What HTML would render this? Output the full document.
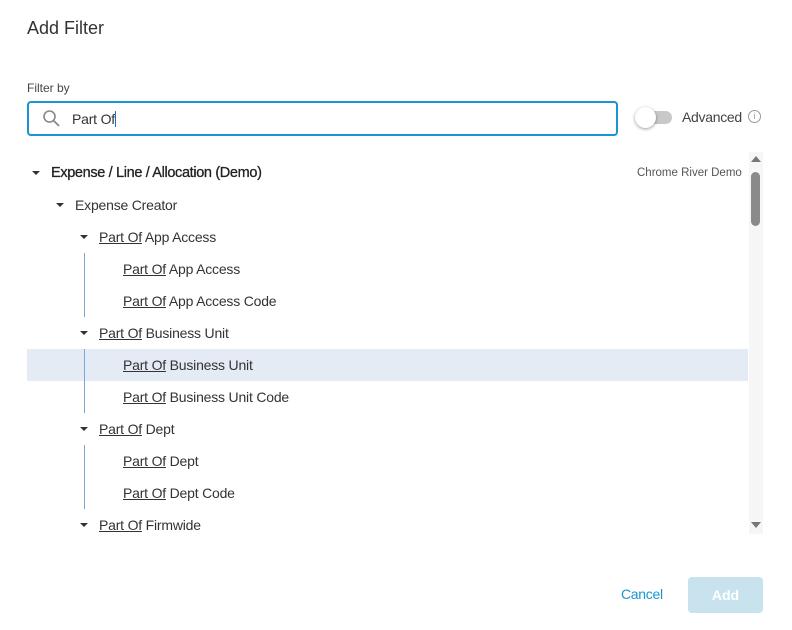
<!DOCTYPE html>
<html><head><style>
body{margin:0;width:792px;height:630px;background:#fff;font-family:"Liberation Sans",sans-serif;color:#333;position:relative;overflow:hidden}
.a{position:absolute;white-space:nowrap}
.row{position:absolute;left:0;height:32px;line-height:32px;font-size:14px;letter-spacing:-0.2px;color:#333}
.row u{text-decoration:underline}
.car{position:absolute;width:0;height:0;border-left:4px solid transparent;border-right:4px solid transparent;border-top:4px solid #333}
.vl{position:absolute;left:84px;width:1px;background:#7aa7d6}
</style></head><body>
<div class="a" style="left:27px;top:18px;font-size:18px;color:#333">Add Filter</div>
<div class="a" style="left:27px;top:81px;font-size:12px;color:#444">Filter by</div>
<div class="a" style="left:27px;top:101px;width:587px;height:31px;border:2px solid #1a95d1;border-radius:4px"></div>
<svg class="a" style="left:42px;top:109px" width="20" height="20" viewBox="0 0 20 20"><circle cx="7.5" cy="7.5" r="5.5" fill="none" stroke="#888" stroke-width="1.6"/><path d="M11.5 11.5L17 17" stroke="#888" stroke-width="1.8"/></svg>
<div class="a" style="left:72px;top:111px;font-size:14px;letter-spacing:-0.2px;color:#333">Part Of<span style="display:inline-block;width:1px;height:16px;background:#1a73c8;vertical-align:-3px"></span></div>
<div class="a" style="left:638px;top:111px;width:34px;height:13px;border-radius:7px;background:#c8c8c8"></div>
<div class="a" style="left:635px;top:107px;width:21px;height:21px;border-radius:50%;background:#fff;box-shadow:0 1px 3px rgba(0,0,0,.4)"></div>
<div class="a" style="left:682px;top:109px;font-size:14px;letter-spacing:-0.3px;color:#444">Advanced</div>
<div class="a" style="left:748px;top:110px;width:11px;height:11px;border:1px solid #999;border-radius:50%;font-size:9px;line-height:11px;text-align:center;color:#999">i</div>
<div class="a" style="left:749px;top:152px;width:14px;height:382px;background:#f6f6f6"></div>
<div class="a" style="left:751px;top:156px;border-left:5px solid transparent;border-right:5px solid transparent;border-bottom:6px solid #777"></div>
<div class="a" style="left:751px;top:172px;width:9px;height:54px;border-radius:5px;background:#8a8a8a"></div>
<div class="a" style="left:751px;top:522px;border-left:5px solid transparent;border-right:5px solid transparent;border-top:6px solid #777"></div>
<div class="a" style="left:27px;top:349px;width:721px;height:32px;background:#e4ebf4"></div>
<div class="a" style="left:637px;top:167px;font-size:11.5px;color:#555">Chrome River Demo</div>
<div class="vl" style="top:253px;height:64px"></div>
<div class="vl" style="top:349px;height:64px"></div>
<div class="vl" style="top:445px;height:64px"></div>
<div class="car" style="left:32px;top:171px"></div><div class="row" style="left:51px;top:157px;font-size:14.5px;letter-spacing:-0.35px;color:#222;-webkit-text-stroke:0.3px #222">Expense / Line / Allocation (Demo)</div>
<div class="car" style="left:56px;top:203px"></div><div class="row" style="left:75px;top:189px">Expense Creator</div>
<div class="car" style="left:80px;top:235px"></div><div class="row" style="left:99px;top:221px"><u>Part Of</u> App Access</div>
<div class="row" style="left:123px;top:253px"><u>Part Of</u> App Access</div>
<div class="row" style="left:123px;top:285px"><u>Part Of</u> App Access Code</div>
<div class="car" style="left:80px;top:331px"></div><div class="row" style="left:99px;top:317px"><u>Part Of</u> Business Unit</div>
<div class="row" style="left:123px;top:349px"><u>Part Of</u> Business Unit</div>
<div class="row" style="left:123px;top:381px"><u>Part Of</u> Business Unit Code</div>
<div class="car" style="left:80px;top:427px"></div><div class="row" style="left:99px;top:413px"><u>Part Of</u> Dept</div>
<div class="row" style="left:123px;top:445px"><u>Part Of</u> Dept</div>
<div class="row" style="left:123px;top:477px"><u>Part Of</u> Dept Code</div>
<div class="car" style="left:80px;top:523px"></div><div class="row" style="left:99px;top:509px"><u>Part Of</u> Firmwide</div>
<div class="a" style="left:621px;top:586px;font-size:14px;letter-spacing:-0.3px;color:#1a95d1">Cancel</div>
<div class="a" style="left:688px;top:577px;width:75px;height:36px;border-radius:4px;background:#c8e2ee;color:#fff;font-size:14px;line-height:36px;text-align:center;font-weight:bold">Add</div>
</body></html>
